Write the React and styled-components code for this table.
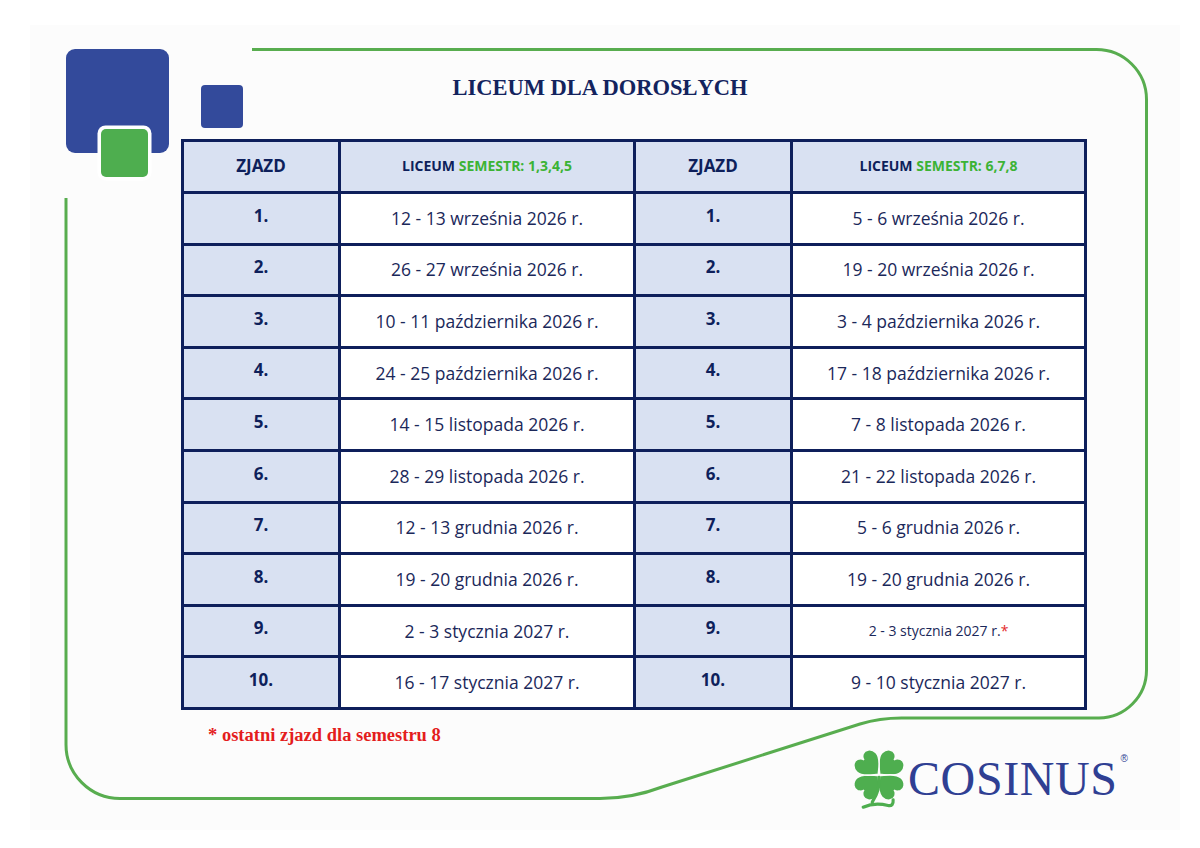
import React from 'react';
import styled, { createGlobalStyle } from 'styled-components';

const Global = createGlobalStyle`
  html, body { margin: 0; padding: 0; background: #ffffff; }
  body { width: 1200px; height: 848px; overflow: hidden; }
  * { box-sizing: border-box; }
`;

const NAVY = '#0e1f5b';
const TEXT = '#1b285a';
const LIGHT = '#d9e1f2';
const GREEN_TXT = '#3cb335';
const FRAME = '#58ad4f';

const Page = styled.div`
  position: relative;
  width: 1200px;
  height: 848px;
  padding: 25px 20px 18px 30px;
  background: #ffffff;
`;

const Sheet = styled.div`
  position: relative;
  width: 1150px;
  height: 805px;
  background: #fcfcfc;
  padding-top: 24px;
`;

const FrameArt = styled.svg`
  position: absolute;
  left: -30px;
  top: -25px;
  width: 1200px;
  height: 848px;
  pointer-events: none;
  z-index: 0;
`;

const Header = styled.header`
  position: relative;
  z-index: 1;
  display: grid;
  grid-template-columns: 1fr auto 1fr;
  align-items: start;
  height: 90px;
  padding: 0 46px 0 36px;
`;

const Mark = styled.svg`
  width: 178px;
  height: 130px;
  overflow: visible;
  justify-self: start;
`;

const Title = styled.h1`
  margin: 28px 0 0;
  font-family: "Liberation Serif", "Times New Roman", serif;
  font-weight: 700;
  font-size: 22.5px;
  line-height: 1;
  color: #13235e;
  white-space: nowrap;
`;

const Schedule = styled.table`
  position: relative;
  z-index: 1;
  margin-left: 151px;
  width: 903px;
  border-collapse: collapse;
  table-layout: fixed;
  border: 3px solid ${NAVY};
  font-family: "Open Sans", "Noto Sans", sans-serif;
`;

const Row = styled.tr`
  height: ${p => (p.$head ? '52px' : '51.6px')};
`;

const Cell = styled.td`
  border: 3px solid ${NAVY};
  padding: 0 4px;
  text-align: center;
  vertical-align: middle;
  white-space: nowrap;
  background: ${p => (p.$shade ? LIGHT : '#ffffff')};
  color: ${p => (p.$bold ? NAVY : TEXT)};
  font-weight: ${p => (p.$bold ? 700 : 400)};
  font-size: ${p => p.$size || '17.5px'};
  line-height: 1.2;
  padding-bottom: ${p => (p.$bold ? '5px' : '0')};
`;

const HeadCell = styled.th`
  border: 3px solid ${NAVY};
  background: ${LIGHT};
  color: ${NAVY};
  font-weight: 700;
  font-size: ${p => p.$size};
  text-align: center;
  vertical-align: middle;
  white-space: nowrap;
  padding: 0 4px 2px;
`;

const Green = styled.span`
  color: ${GREEN_TXT};
`;

const Star = styled.span`
  color: #e42a2a;
`;

const Note = styled.p`
  position: relative;
  z-index: 1;
  margin: 16px 0 0 178px;
  font-family: "Liberation Serif", "Times New Roman", serif;
  font-weight: 700;
  font-size: 18.5px;
  line-height: 1;
  color: #e41d1d;
`;

const Brand = styled.div`
  position: relative;
  z-index: 1;
  display: flex;
  align-items: flex-start;
  margin-top: 6px;
  padding-left: 821px;
`;

const Clover = styled.svg`
  width: 56px;
  height: 62px;
  flex: none;
  margin-top: -2px;
`;

const Word = styled.span`
  margin: 5px 0 0 1px;
  font-family: "Liberation Serif", "Times New Roman", serif;
  font-size: 48px;
  line-height: 1;
  color: #2f3f93;
  letter-spacing: 0.6px;
`;

const Reg = styled.sup`
  margin: 4px 0 0 3px;
  font-family: "Liberation Sans", Arial, sans-serif;
  font-size: 10px;
  line-height: 1;
  color: #2f3f93;
  vertical-align: top;
`;

const rows = [
  ['1.', '12 - 13 września 2026 r.', '1.', '5 - 6 września 2026 r.'],
  ['2.', '26 - 27 września 2026 r.', '2.', '19 - 20 września 2026 r.'],
  ['3.', '10 - 11 października 2026 r.', '3.', '3 - 4 października 2026 r.'],
  ['4.', '24 - 25 października 2026 r.', '4.', '17 - 18 października 2026 r.'],
  ['5.', '14 - 15 listopada 2026 r.', '5.', '7 - 8 listopada 2026 r.'],
  ['6.', '28 - 29 listopada 2026 r.', '6.', '21 - 22 listopada 2026 r.'],
  ['7.', '12 - 13 grudnia 2026 r.', '7.', '5 - 6 grudnia 2026 r.'],
  ['8.', '19 - 20 grudnia 2026 r.', '8.', '19 - 20 grudnia 2026 r.'],
  ['9.', '2 - 3 stycznia 2027 r.', '9.', null],
  ['10.', '16 - 17 stycznia 2027 r.', '10.', '9 - 10 stycznia 2027 r.'],
];

const HEART =
  'M0 0 C -3 -3 -12 -8 -12 -15 C -12 -21 -7 -24 -3.5 -22.5 C -1.5 -21.5 0 -19.5 0 -18 C 0 -19.5 1.5 -21.5 3.5 -22.5 C 7 -24 12 -21 12 -15 C 12 -8 3 -3 0 0 Z';

export default function App() {
  return (
    <>
      <Global />
      <Page>
        <Sheet>
          <FrameArt viewBox="0 0 1200 848">
            <path
              d="M 252 49.5 H 1096 A 50 50 0 0 1 1146.5 99.5 V 670 A 48 48 0 0 1 1099 718 H 905 Q 881 717.5 860 724 L 662 787 Q 632 798.5 600 798.5 H 120 A 54 54 0 0 1 66 744.5 V 198"
              fill="none"
              stroke={FRAME}
              strokeWidth="3"
            />
          </FrameArt>

          <Header>
            <Mark viewBox="0 0 178 130">
              <rect x="0" y="0" width="103" height="104" rx="9" fill="#334a9b" />
              <rect x="31.5" y="76.5" width="54" height="55" rx="8" fill="#ffffff" />
              <rect x="35" y="80" width="47" height="48" rx="5" fill="#4eae4f" />
              <rect x="135" y="36" width="42" height="43" rx="4" fill="#334a9b" />
            </Mark>
            <Title>LICEUM DLA DOROSŁYCH</Title>
            <span />
          </Header>

          <Schedule>
            <colgroup>
              <col style={{ width: '157px' }} />
              <col style={{ width: '295px' }} />
              <col style={{ width: '157px' }} />
              <col style={{ width: '294px' }} />
            </colgroup>
            <thead>
              <Row $head>
                <HeadCell $size="17px">ZJAZD</HeadCell>
                <HeadCell $size="14px">
                  LICEUM <Green>SEMESTR: 1,3,4,5</Green>
                </HeadCell>
                <HeadCell $size="17px">ZJAZD</HeadCell>
                <HeadCell $size="14px">
                  LICEUM <Green>SEMESTR: 6,7,8</Green>
                </HeadCell>
              </Row>
            </thead>
            <tbody>
              {rows.map((r, i) => (
                <Row key={i}>
                  <Cell $shade $bold $size="17px">{r[0]}</Cell>
                  <Cell>{r[1]}</Cell>
                  <Cell $shade $bold $size="17px">{r[2]}</Cell>
                  {r[3] ? (
                    <Cell>{r[3]}</Cell>
                  ) : (
                    <Cell $size="14px">
                      2 - 3 stycznia 2027 r.<Star>*</Star>
                    </Cell>
                  )}
                </Row>
              ))}
            </tbody>
          </Schedule>

          <Note>* ostatni zjazd dla semestru 8</Note>

          <Brand>
            <Clover viewBox="0 0 56 62">
              <g transform="translate(28 27) scale(1.13)">
                {[45, 135, 225, 315].map(a => (
                  <path
                    key={a}
                    d={HEART}
                    transform={`rotate(${a}) translate(0 -0.8)`}
                    fill="#4eae4f"
                    stroke="#fcfcfc"
                    strokeWidth="1.4"
                  />
                ))}
                <path
                  d="M 0 2 C 1 10 -2 18 -6 24 M -14 28.5 Q -4 24 8 27 Q 13 28 12.5 22"
                  fill="none"
                  stroke="#4eae4f"
                  strokeWidth="2.8"
                  strokeLinecap="round"
                />
              </g>
            </Clover>
            <Word>COSINUS</Word>
            <Reg>®</Reg>
          </Brand>
        </Sheet>
      </Page>
    </>
  );
}
